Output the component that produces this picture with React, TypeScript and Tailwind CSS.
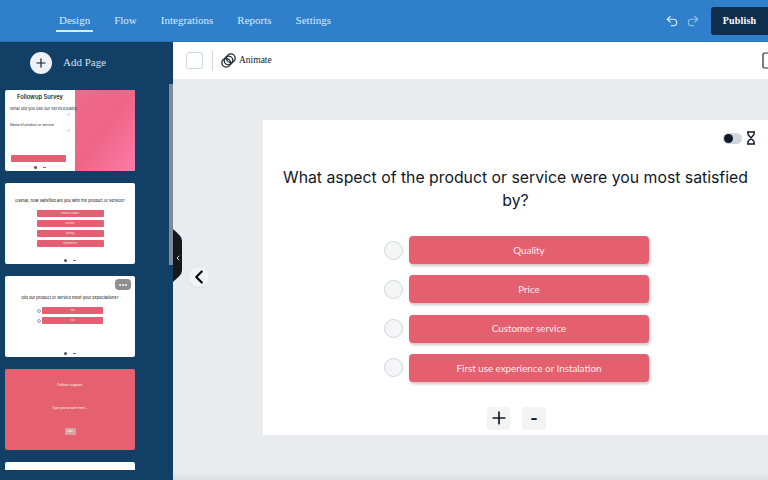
import { ChevronLeft, Ellipsis, Plus, Redo2, Undo2 } from "lucide-react";

const navItems = ["Design", "Flow", "Integrations", "Reports", "Settings"];
const options = ["Quality", "Price", "Customer service", "First use experience or Instalation"];

const Pager = () => (
  <div className="absolute bottom-[2px] left-0 right-0 flex justify-center gap-[6px]">
    <span className="h-[3px] w-[3px] rounded-full bg-gray-600" />
    <span className="mt-[1px] h-[1px] w-[3px] bg-gray-500" />
  </div>
);

const ThumbOne = () => (
  <div className="flex h-[81px] w-[130px] shrink-0 overflow-hidden rounded-[2px] bg-white font-['Inter',sans-serif]">
    <div className="relative w-[70px] px-[5px] pt-[3px]">
      <div className="whitespace-nowrap text-center text-[5.8px] font-medium leading-[7px] text-black">Followup Survey</div>
      <div className="mt-[7px] whitespace-nowrap text-[4px] leading-[4px] text-gray-800">What did you use our service(Date)</div>
      <div className="ml-auto mt-[2px] h-[3px] w-[3px] bg-gray-200" />
      <div className="mt-[7px] whitespace-nowrap text-[3.4px] leading-[4px] text-gray-800">Name of product or service</div>
      <div className="ml-auto mt-[2px] h-[3px] w-[3px] bg-gray-200" />
      <div className="ml-[1px] mt-[23px] h-[7px] w-[55px] rounded-[1px] bg-[#e45f72]" />
      <Pager />
    </div>
    <div className="flex-1 bg-gradient-to-br from-[#ee6a8b] via-[#ee6587] to-[#fd7caa]" />
  </div>
);

const ThumbTwo = () => (
  <div className="relative flex h-[81px] w-[130px] shrink-0 flex-col items-center rounded-[2px] bg-white pt-[15px] font-['Inter',sans-serif]">
    <div className="whitespace-nowrap text-[4px] leading-[5px] text-black">Overall, how satisfied are you with the product or service?</div>
    <div className="mt-[7px] flex flex-col gap-[3px]">
      {["Product Quality", "Service", "Pricing", "Experience"].map((label) => (
        <div key={label} className="flex h-[7px] w-[67px] items-center justify-center rounded-[1px] bg-[#e45f72] text-[2.5px] text-white/80">
          {label}
        </div>
      ))}
    </div>
    <Pager />
  </div>
);

const ThumbThree = () => (
  <div className="relative flex h-[81px] w-[130px] shrink-0 flex-col items-center rounded-[2px] bg-white pt-[19px] font-['Inter',sans-serif]">
    <div className="absolute right-[4px] top-[3px] flex h-[11px] w-[16px] items-center justify-center rounded-[4px] bg-[#8e8e8e]">
      <Ellipsis className="h-[10px] w-[10px] text-white" strokeWidth={3} />
    </div>
    <div className="whitespace-nowrap text-[4px] leading-[5px] text-black">Did our product or service meet your expectations?</div>
    <div className="mt-[7px] flex flex-col gap-[3px]">
      {["Yes", "No"].map((label) => (
        <div key={label} className="flex items-center gap-[1.5px]">
          <span className="h-[4px] w-[4px] rounded-full border-[0.5px] border-gray-400 bg-gray-100" />
          <div className="flex h-[7px] w-[61px] items-center justify-center rounded-[1px] bg-[#e45f72] text-[2.5px] text-white/80">{label}</div>
        </div>
      ))}
    </div>
    <Pager />
  </div>
);

const ThumbFour = () => (
  <div className="flex h-[81px] w-[130px] shrink-0 flex-col items-center rounded-[2px] bg-[#e6616f] pt-[14px] font-['Inter',sans-serif] text-white/90">
    <div className="text-[3.6px] leading-[5px]">Follow support</div>
    <div className="mt-[18px] text-[3px] leading-[5px]">Type your answer here ...</div>
    <div className="mt-[17px] flex h-[7px] w-[11px] items-center justify-center rounded-[1px] bg-[#d9a3a3] text-[2.5px]">Start</div>
  </div>
);

export default function App() {
  return (
    <div className="relative flex h-[480px] w-[768px] flex-col overflow-hidden bg-[#e9ebef] font-['Liberation_Serif',serif]">
      <header className="flex h-[42px] shrink-0 items-center border-b border-[#2a72b5] bg-[#2f7fcb]">
        <nav className="ml-[56px] flex gap-[18px] text-[11px] text-[#d8ecfb]">
          {navItems.map((item, i) => (
            <span key={item} className={i === 0 ? "border-b-2 border-[#d8ecfb] px-[3px] pb-[1px] pt-[3px]" : "border-b-2 border-transparent px-[3px] pb-[1px] pt-[3px]"}>
              {item}
            </span>
          ))}
        </nav>
        <div className="ml-auto flex items-center gap-[7px]">
          <Undo2 className="h-[14px] w-[14px] text-[#d8ecfb]" strokeWidth={2} />
          <Redo2 className="h-[14px] w-[14px] text-[#8fc0ea]" strokeWidth={2} />
          <button className="ml-[4px] flex h-[28px] w-[57px] items-center justify-center rounded-l-[3px] bg-[#0f2d4c] text-[10px] font-bold tracking-[0.2px] text-white">
            Publish
          </button>
        </div>
      </header>

      <div className="flex min-h-0 flex-1">
        <aside className="relative w-[173px] shrink-0 overflow-hidden bg-[#123f66]">
          <div className="flex h-[40px] items-center pl-[30px] pt-[1px]">
            <span className="flex h-[22px] w-[22px] items-center justify-center rounded-full bg-[#eef1f5]">
              <Plus className="h-[14px] w-[14px] text-gray-900" strokeWidth={2} />
            </span>
            <span className="ml-[11px] text-[11px] text-[#cfe3f2]">Add Page</span>
          </div>
          <div className="mt-[8px] flex h-[380px] flex-col gap-[12px] overflow-hidden pl-[5px]">
            <ThumbOne />
            <ThumbTwo />
            <ThumbThree />
            <ThumbFour />
            <div className="h-[81px] w-[130px] shrink-0 rounded-[2px] bg-white" />
          </div>
          <div className="absolute right-0 top-[42px] h-[181px] w-[4px] bg-[#7e8c99]" />
        </aside>

        <main className="flex min-w-0 flex-1 flex-col">
          <div className="flex h-[37px] shrink-0 items-center bg-white pl-[13px]">
            <span className="h-[17px] w-[17px] rounded-[3px] border-[1.5px] border-gray-300" />
            <span className="ml-[9px] h-[20px] w-px bg-gray-300" />
            <svg viewBox="0 0 16 16" className="ml-[8px] h-[15px] w-[15px] fill-none stroke-gray-800" strokeWidth="1.4">
              <circle cx="10.5" cy="5.5" r="4.6" />
              <circle cx="8" cy="8" r="4.6" />
              <circle cx="5.5" cy="10.5" r="4.6" />
            </svg>
            <span className="ml-[3px] text-[9.5px] text-gray-900">Animate</span>
            <svg viewBox="0 0 6 17" className="ml-auto h-[17px] w-[6px] fill-none stroke-gray-800" strokeWidth="1.2">
              <path d="M6 1H2.5A1.5 1.5 0 0 0 1 2.5V14.5A1.5 1.5 0 0 0 2.5 16H6" />
            </svg>
          </div>

          <div className="min-h-0 flex-1 pl-[90px] pt-[41px]">
            <section className="relative h-[315px] w-[505px] bg-white pt-[46px] font-['Inter',sans-serif]">
              <div className="absolute right-[12px] top-[11px] flex items-center gap-[4px]">
                <span className="flex h-[11px] w-[19px] items-center rounded-full bg-gray-300 pl-[1px]">
                  <span className="h-[9px] w-[9px] rounded-full bg-gray-900" />
                </span>
                <svg viewBox="0 0 10 14" className="h-[14px] w-[10px] fill-none stroke-gray-900" strokeWidth="1.4">
                  <path d="M1 1h8M1 13h8M2 1v2.5L8 10.5V13M8 1v2.5L2 10.5V13" />
                </svg>
              </div>
              <h1 className="mx-auto w-[480px] text-center text-[15.8px] font-normal leading-[23px] text-gray-900">
                What aspect of the product or service were you most satisfied by?
              </h1>
              <div className="mt-[24px] flex flex-col gap-[11.3px] pl-[121px] font-['Lato',sans-serif]">
                {options.map((option) => (
                  <div key={option} className="flex items-center gap-[6px]">
                    <span className="h-[19px] w-[19px] rounded-full border border-gray-300 bg-[#f5f5f5]" />
                    <button className="flex h-[28px] w-[240px] items-center justify-center rounded-[4px] bg-[#e4606f] text-[9.8px] text-[#fdeef0] shadow-[1px_2px_3px_rgba(120,80,80,0.35)]">
                      {option}
                    </button>
                  </div>
                ))}
              </div>
              <div className="mt-[25px] flex justify-center gap-[12px] pl-[2px]">
                <span className="flex h-[23px] w-[23px] items-center justify-center rounded-[3px] bg-[#f3f3f3]">
                  <Plus className="h-[20px] w-[20px] text-gray-900" strokeWidth={2} />
                </span>
                <span className="flex h-[23px] w-[24px] items-center justify-center rounded-[3px] bg-[#f3f3f3] text-[16px] font-bold text-gray-900">-</span>
              </div>
            </section>
          </div>
          <div className="h-[8px] shrink-0 bg-gradient-to-b from-[#e9ebef] to-[#dcdee2]" />
        </main>
      </div>

      {/* collapse handle on the sidebar edge */}
      <svg viewBox="0 0 10 54" className="absolute left-[173px] top-[229px] h-[54px] w-[10px] fill-[#15181c]">
        <path d="M0 0C4 4 9 7 9 12V41C9 46 4 49 0 53Z" />
      </svg>
      <ChevronLeft className="absolute left-[174px] top-[254px] h-[8px] w-[8px] text-gray-300" strokeWidth={3} />
      <div className="absolute left-[189px] top-[267px] flex h-[20px] w-[20px] items-center justify-center rounded-full bg-[#f2f3f5] shadow-[0_1px_3px_rgba(0,0,0,0.06)]">
        <ChevronLeft className="h-[22px] w-[22px] shrink-0 text-black" strokeWidth={2.4} />
      </div>
    </div>
  );
}
